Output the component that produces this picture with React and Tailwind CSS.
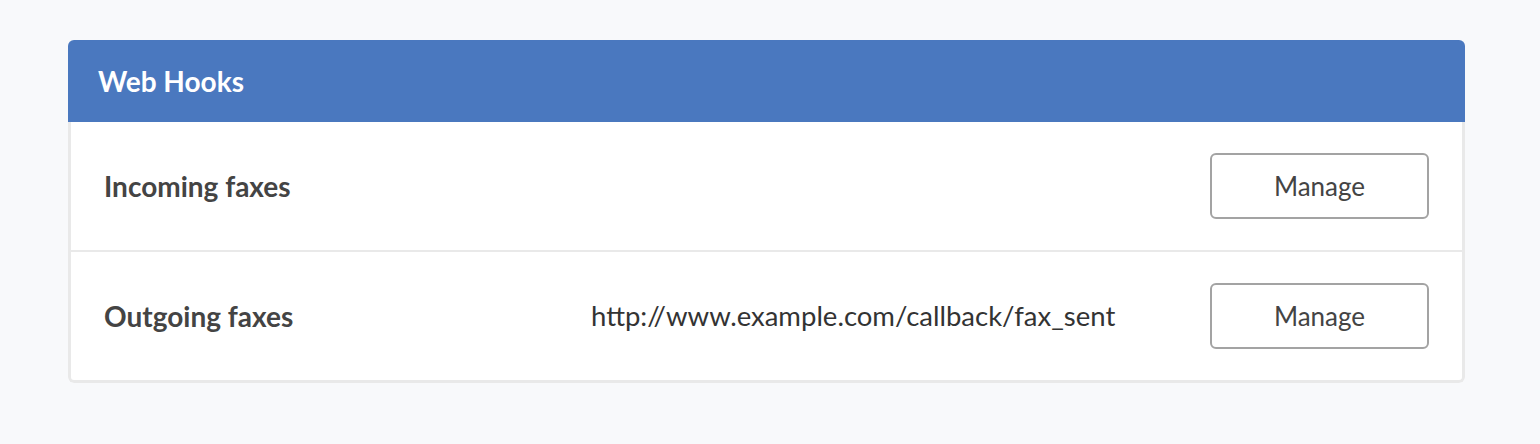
import React from 'react'

const hooks = [
  { name: 'Incoming faxes', url: '' },
  { name: 'Outgoing faxes', url: 'http://www.example.com/callback/fax_sent' },
]

export default function App() {
  return (
    <div className="min-h-screen bg-[#f8f9fb] pt-10 pl-[68px] pr-[75px] font-['Lato',sans-serif]">
      <div className="rounded-md overflow-hidden">
        <div className="bg-[#4a78bf] h-[82px] pl-[30px] flex items-center">
          <h2 className="text-white text-[28px] font-bold">Web Hooks</h2>
        </div>
        <div className="bg-white border-[3px] border-t-0 border-[#e9e9e9] rounded-b-md">
          {hooks.map((hook, i) => (
            <div
              key={hook.name}
              className={`grid grid-cols-[487px_1fr_auto] items-center pl-[33px] pr-[33px] ${i > 0 ? 'border-t-2 border-[#e9e9e9] h-[130px]' : 'h-[128px]'}`}
            >
              <div className="text-[28px] font-bold text-[#444]">{hook.name}</div>
              <div className="text-[27.5px] text-[#333]">{hook.url}</div>
              <button className="w-[219px] h-[66px] rounded-md border-2 border-[#a3a3a3] text-[26px] text-[#444] bg-white">
                Manage
              </button>
            </div>
          ))}
        </div>
      </div>
    </div>
  )
}
